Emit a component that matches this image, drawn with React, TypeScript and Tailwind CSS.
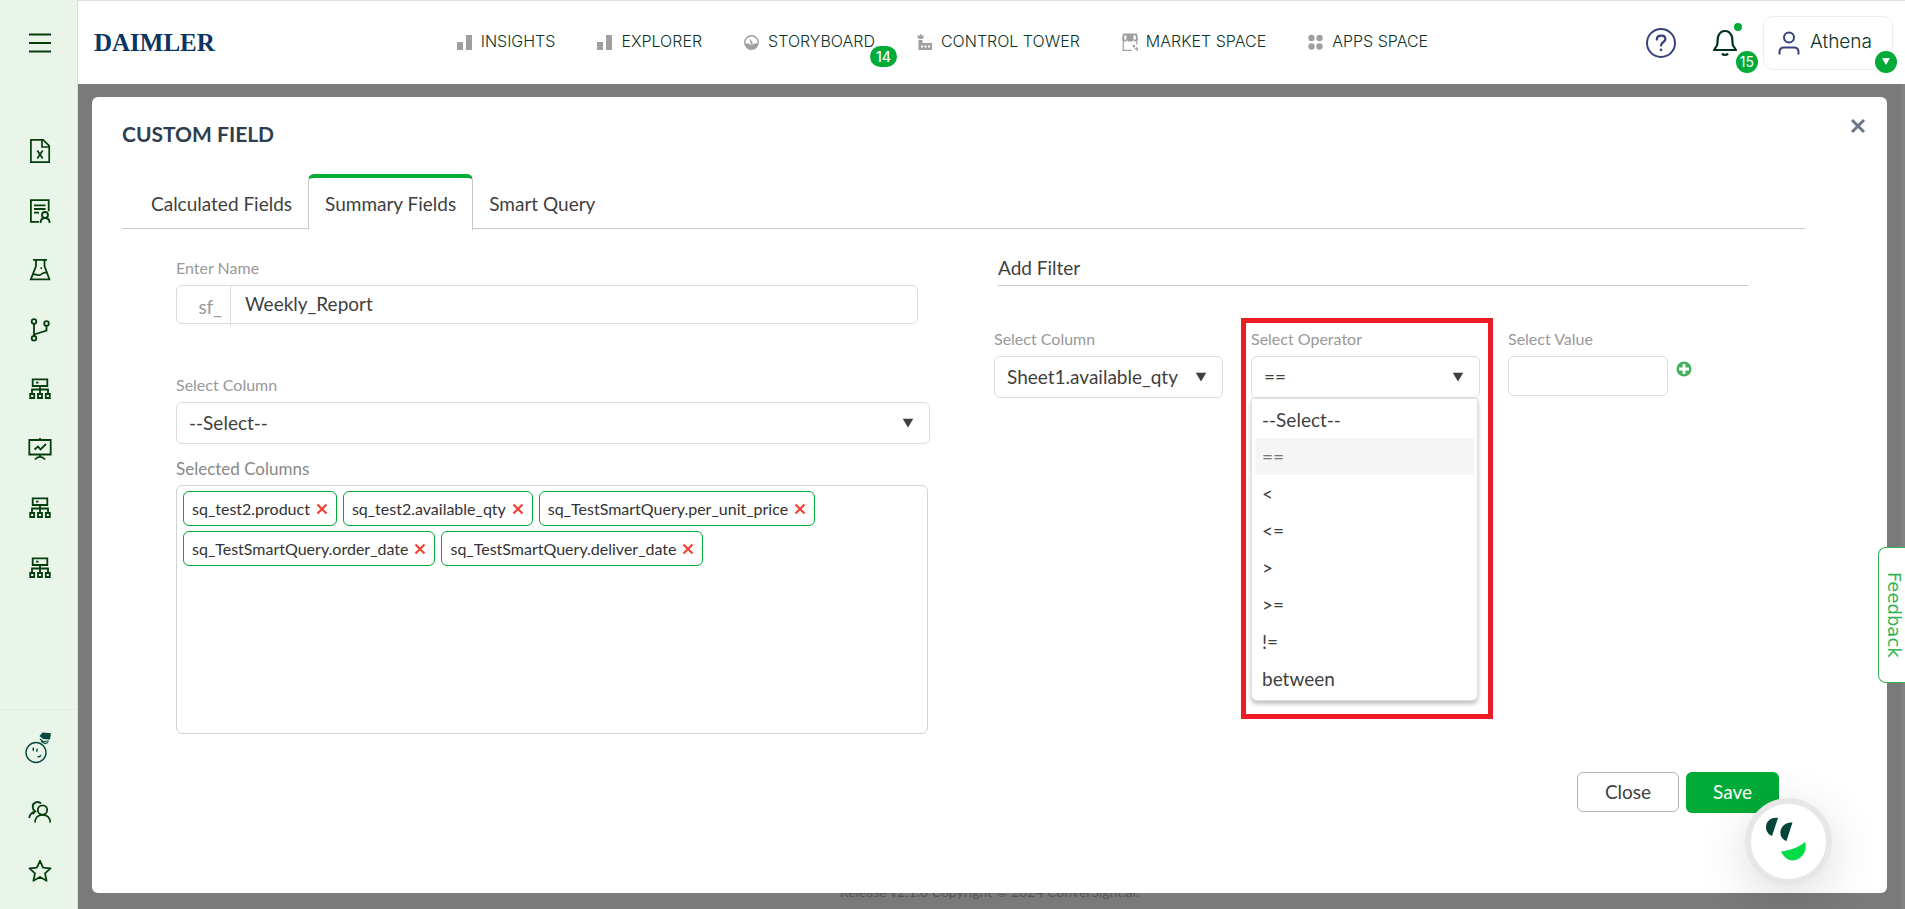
import { useState } from 'react';
import type { ReactNode } from 'react';

const NAV_ITEMS = [
  { label: 'INSIGHTS', icon: 'bars' },
  { label: 'EXPLORER', icon: 'bars' },
  { label: 'STORYBOARD', icon: 'gauge', badge: '14' },
  { label: 'CONTROL TOWER', icon: 'tower' },
  { label: 'MARKET SPACE', icon: 'market' },
  { label: 'APPS SPACE', icon: 'apps' }
];

const TABS = ['Calculated Fields', 'Summary Fields', 'Smart Query'];

const OPERATORS = ['--Select--', '==', '<', '<=', '>', '>=', '!=', 'between'];

const SELECTED_COLUMNS = [
  'sq_test2.product',
  'sq_test2.available_qty',
  'sq_TestSmartQuery.per_unit_price',
  'sq_TestSmartQuery.order_date',
  'sq_TestSmartQuery.deliver_date'
];

const NavIcon = ({ name }: { name: string }) => (
  <svg viewBox="0 0 16 18" className="h-[18px] w-4 shrink-0 fill-[#9f9f9f]">
    {name === 'bars' && (
      <>
        <rect x="0" y="9" width="6" height="8" />
        <rect x="9" y="2" width="6" height="15" />
      </>
    )}
    {name === 'gauge' && (
      <>
        <circle cx="7.5" cy="9.5" r="6.8" fill="none" stroke="#9f9f9f" strokeWidth="1.4" />
        <path d="M1 10.5h3.5c1 0 1.4 1.5 3 1.500s2-1.500 3-1.500H14a6.600 6.600 0 0 1-13 0Z" />
        <path d="M5.300 5.500 8.500 9v2.500H7Z" />
      </>
    )}
    {name === 'tower' && (
      <>
        <path d="M3 1h1.200v1.500H7L5.800 6H1.500L0 2.500h3ZM1.500 7h4v3H15v7H1.500Z" />
        <path d="M4 12.500h2v2H4Zm3.500 0h2v2h-2Zm3.500 0h2v2h-2Z" fill="#fff" />
      </>
    )}
    {name === 'market' && (
      <>
        <path d="M1 .5h14l1 5.500c0 1.500-1 2.500-2.200 2.500-1 0-2-.5-2.300-1.500-.5 1-1.500 1.500-2.300 1.500H7c-1 0-1.500-.5-2-1.500-.3 1-1.200 1.500-2.500 1.500C1 8.500 0 7.500 0 6Z" />
        <path d="M2.500 2.500h2V6.500h-2.500Zm9 0h2l.5 4h-2.500Z" fill="#fff" />
        <path d="M1.200 7.500v9.800h8.500M14.800 8v3.500" fill="none" stroke="#9f9f9f" strokeWidth="1.200" />
        <path d="M11 12.500h2l-1 2ZM12.500 16.500l2.500-2.500M14.500 15.500h1.500l-1 2Z" stroke="#9f9f9f" />
      </>
    )}
    {name === 'apps' && (
      <>
        <circle cx="3.500" cy="5" r="3.200" />
        <circle cx="11.500" cy="5" r="3.200" />
        <circle cx="3.500" cy="13.500" r="3.200" />
        <circle cx="11.500" cy="13.500" r="3.200" />
      </>
    )}
  </svg>
);

const SideIcon = ({ children }: { children: ReactNode }) => (
  <svg viewBox="0 0 24 24" className="size-6" fill="none" stroke="#063d0c" strokeWidth="1.800">
    {children}
  </svg>
);

const FileIcon = () => (
  <SideIcon>
    <path d="M2.900 .9h12.300l6 6v16.200H2.900ZM14 1v7h7M9.300 11.500l5.400 8M14.700 11.500l-5.400 8" strokeWidth="1.700" />
  </SideIcon>
);

const ReportIcon = () => (
  <SideIcon>
    <path d="M11 22.800H2.900V1.200h17.800v11M6 6.300h11.500M6 10h11.500M6 13.700h5" />
    <circle cx="17" cy="16" r="3" />
    <path d="M12.600 24c0-3.500 1.800-5 4.400-5s4.600 1.500 4.600 5" />
  </SideIcon>
);

const FlaskIcon = () => (
  <SideIcon>
    <path d="M5 1.800h14M8 2v6L2.800 21.300h18.600L16.500 8V2M4.500 16.500c3-1.200 5 1.500 7.500.5s2.500-3 7.500-2.500M12.500 10.200h1.500" />
  </SideIcon>
);

const BranchIcon = () => (
  <SideIcon>
    <circle cx="6" cy="3.500" r="2.300" />
    <circle cx="6" cy="20.300" r="2.300" />
    <circle cx="18.500" cy="5.500" r="2.300" />
    <path d="M6 6v12M6 16.500l12.500-4V8" />
  </SideIcon>
);

const NetworkIcon = () => (
  <SideIcon>
    <path d="M4.700 2.300h14.600V9H4.700ZM8 5.700h2.500M12 9v8M4 17v-4.500h16V17M2.200 17h4v4h-4ZM10 17h4v4h-4ZM17.800 17h4v4h-4Z" />
  </SideIcon>
);

const BoardIcon = () => (
  <SideIcon>
    <path d="M1.300 3h21.400v14.500H1.300ZM12 1v2M12 17.500V20M7 22.500c1.500-2 3-2.700 5-2.700s3.500.7 5 2.700M6.500 12.500 10 9.500l2.500 3L18 7" />
  </SideIcon>
);

const MascotIcon = () => (
  <svg viewBox="0 0 28 32" className="mr-1 h-8 w-7" fill="#064a3d">
    <circle cx="12" cy="20.500" r="10" fill="none" stroke="#064a3d" strokeWidth="1.400" />
    <path d="m15.500 4 3-3.500 8.500.7-1 6.300-7-.5Z" />
    <path d="m16 7 3 2.500 6-.5M17 9.200l4 2.300 3-1" fill="none" stroke="#064a3d" strokeWidth="1.200" />
    <path d="M10 15.200v4c-1.700.2-2.500-3.500 0-4ZM13.800 16.200l-.4 4c-1.700 0-1.800-3.700.4-4ZM12.800 24.200c2 0 3.200-.6 4.600-2 .4 3.300-3.400 4.300-4.600 2Z" />
  </svg>
);

const UsersIcon = () => (
  <SideIcon>
    <circle cx="14.500" cy="10" r="4.700" />
    <path d="M7 22.500c0-5 3.200-7.700 7.500-7.700s7.700 2.700 7.700 7.700M13 3.500C10 .5 4.500 2.500 4.700 7c0 2 1 3.300 2.400 4.300C3.500 12.500 1.500 14.500 1.200 18M7.100 11.300l-2.400 3" />
  </SideIcon>
);

const StarIcon = () => (
  <SideIcon>
    <path d="m12 1.800 3.100 6.800 7.400.8-5.500 5 1.600 7.400-6.600-3.800-6.600 3.800L7 14.400l-5.500-5 7.400-.8Z" strokeLinejoin="round" />
  </SideIcon>
);

const MENU = [
  { label: 'Datasets', Icon: FileIcon },
  { label: 'Reports', Icon: ReportIcon },
  { label: 'Experiments', Icon: FlaskIcon },
  { label: 'Relationships', Icon: BranchIcon },
  { label: 'Servers', Icon: NetworkIcon },
  { label: 'Presentations', Icon: BoardIcon },
  { label: 'Clusters', Icon: NetworkIcon },
  { label: 'Pipelines', Icon: NetworkIcon }
];

const SHORTCUTS = [
  { label: 'Assistant', Icon: MascotIcon },
  { label: 'Users', Icon: UsersIcon },
  { label: 'Favourites', Icon: StarIcon }
];

const Caret = () => (
  <svg viewBox="0 0 12 10" className="pointer-events-none absolute top-1/2 right-4 h-[9px] w-3 -translate-y-1/2 fill-[#3f3f3f]">
    <path d="M0 0h12L6 10Z" />
  </svg>
);

interface SelectFieldProps {
  id: string;
  label: string;
  value: string;
  options: string[];
  onChange: (value: string) => void;
}

const SelectField = ({ id, label, value, options, onChange }: SelectFieldProps) => (
  <div className="min-w-0">
    <label htmlFor={id} className="mb-[5px] block text-base leading-6 text-[#999]">{label}</label>
    <div className="relative">
      <select
        id={id}
        value={value}
        onChange={(e) => onChange(e.target.value)}
        className="block h-[42px] w-full appearance-none rounded-md border border-[#dcdcdc] bg-white px-3 text-[19px] text-[#3f3f3f] outline-none"
      >
        {options.map((option) => (
          <option key={option}>{option}</option>
        ))}
      </select>
      <Caret />
    </div>
  </div>
);

const Sidebar = () => (
  <aside className="flex w-[78px] shrink-0 flex-col justify-between border-r border-[#d5e4d6] bg-[#e9f5e9] pl-0.5">
    <div className="flex flex-col items-center pt-[31px]">
      <button aria-label="Toggle menu">
        <SideIcon>
          <path d="M1 3.500h22M1 12h22M1 20.500h22" strokeWidth="2.200" />
        </SideIcon>
      </button>
      <nav className="mt-[84px] flex h-[441px] flex-col items-center justify-between">
        {MENU.map(({ label, Icon }) => (
          <button key={label} aria-label={label}>
            <Icon />
          </button>
        ))}
      </nav>
    </div>
    <div className="-ml-0.5 flex h-[200px] flex-col items-center justify-between border-t border-[#e0eee1] pt-[22px] pb-[26px] pl-0.5">
      {SHORTCUTS.map(({ label, Icon }) => (
        <button key={label} aria-label={label}>
          <Icon />
        </button>
      ))}
    </div>
  </aside>
);

const Header = () => (
  <header className="flex h-[84px] shrink-0 items-center justify-between border-t border-[#e0e0e0] bg-white pr-3 pl-4">
    <a href="#home" className="font-['Liberation_Serif'] text-[25px] leading-8 font-bold text-[#0b3563]">DAIMLER</a>
    <nav className="ml-6 flex items-center gap-[42px] pb-0.5 font-[Inter] text-base font-light text-[#0b3329]">
      {NAV_ITEMS.map((item) => (
        <a key={item.label} href="#nav" className="relative flex items-center gap-2 whitespace-nowrap">
          <NavIcon name={item.icon} />
          <span className="pb-0.5 leading-5">{item.label}</span>
          {item.badge && (
            <span className="absolute -right-[22px] -bottom-3.5 rounded-full bg-[#00ab37] px-1.5 text-sm leading-[21px] font-medium text-white">
              {item.badge}
            </span>
          )}
        </a>
      ))}
    </nav>
    <div className="flex items-center font-[Inter]">
      <button aria-label="Help" className="mr-9">
        <svg viewBox="0 0 30 30" className="size-[30px]" fill="none" stroke="#38427a" strokeWidth="2" strokeLinecap="round">
          <circle cx="15" cy="15" r="14" />
          <path d="M10.800 11.500c.2-5 8.400-5 8.600-.5 0 3.300-4.400 3.200-4.400 6.500" strokeWidth="2.300" />
          <circle cx="15" cy="21.800" r=".6" strokeWidth="1.600" />
        </svg>
      </button>
      <button aria-label="Notifications" className="relative mr-[25px]">
        <svg viewBox="0 0 26 28" className="h-7 w-[26px]" fill="none" stroke="#003024" strokeWidth="2.200">
          <path d="M2 21h22l-3-4.500C20 14 21 10 19.500 6.500 18 3 16 2 13 2S8 3 6.500 6.500C5 10 6 14 5 16.500Z" strokeLinejoin="round" />
          <path d="M10 24.500c1.500 2 4.500 2 6 0" />
        </svg>
        <span className="absolute -top-1.5 -right-1 size-2 rounded-full bg-[#00ab37]" />
        <span className="absolute -right-5 -bottom-4 size-[22px] rounded-full bg-[#00ab37] text-center text-sm leading-[22px] text-white">15</span>
      </button>
      <button className="relative flex h-[54px] items-center gap-2.5 rounded-[10px] border border-[#ededed] pr-5 pl-3.5 text-[19px] font-light text-[#0b3329]">
        <svg viewBox="0 0 22 24" className="h-6 w-[22px]" fill="none" stroke="#38427a" strokeWidth="2">
          <circle cx="11" cy="6.500" r="5" />
          <path d="M1.500 23.500V21c0-3 1.700-4.500 4.500-4.500h10c2.800 0 4.500 1.500 4.500 4.500v2.500" />
        </svg>
        Athena
        <span className="absolute -right-[5px] -bottom-1 flex size-[22px] items-center justify-center rounded-full bg-[#00ab37]">
          <svg viewBox="0 0 8 7" className="h-[7px] w-2 fill-white">
            <path d="M0 0h8L4 7Z" />
          </svg>
        </span>
      </button>
    </div>
  </header>
);

export default function App() {
  const [activeTab, setActiveTab] = useState('Summary Fields');
  const [name, setName] = useState('Weekly_Report');
  const [columns, setColumns] = useState(SELECTED_COLUMNS);
  const [column, setColumn] = useState('--Select--');
  const [filterColumn, setFilterColumn] = useState('Sheet1.available_qty');
  const [operator, setOperator] = useState('==');
  const [filterValue, setFilterValue] = useState('');

  return (
    <div className="flex h-screen overflow-hidden bg-white font-[Lato,sans-serif]">
      <Sidebar />
      <div className="flex min-w-0 flex-1 flex-col">
        <Header />
        <main className="relative flex flex-1 flex-col justify-end border-r-4 border-[#828282] bg-[#7a7a7a]">
          <footer className="pb-[5px] text-center text-sm leading-6 text-[#555]">
            Release v2.1.0 Copyright © 2024 ConverSight.ai.
          </footer>

          {/* Custom field dialog */}
          <section
            role="dialog"
            aria-labelledby="dialog-title"
            className="absolute inset-x-3.5 top-[13px] bottom-4 rounded-md bg-white pr-[82px] pl-[30px] text-[#3f3f3f]"
          >
            <button aria-label="Close dialog" className="absolute top-[21px] right-[21px]">
              <svg viewBox="0 0 16 16" className="size-4" fill="none" stroke="#6b7785" strokeWidth="3">
                <path d="m2 2 12 12M14 2 2 14" />
              </svg>
            </button>
            <h1 id="dialog-title" className="pt-[21px] text-[21px] leading-8 font-bold text-[#2f3e4e]">CUSTOM FIELD</h1>

            <div role="tablist" className="mt-6 flex h-[55px] border-b border-[#c8c8c8] pl-[13px] text-[19px]">
              {TABS.map((tab) => (
                <button
                  key={tab}
                  role="tab"
                  aria-selected={tab === activeTab}
                  onClick={() => setActiveTab(tab)}
                  className={`border-t-4 px-4 ${
                    tab === activeTab
                      ? 'h-14 rounded-t-md border-x border-x-[#c8c8c8] border-t-[#00ab37] bg-white'
                      : 'border-t-transparent pt-0.5'
                  }`}
                >
                  {tab}
                </button>
              ))}
            </div>

            <div className="grid grid-cols-2 gap-16 pt-[27px] pr-[57px] pl-[54px]">
              <div>
                <label htmlFor="field-name" className="mb-[5px] block text-base leading-6 text-[#999]">Enter Name</label>
                <div className="mr-3 flex h-[39px] rounded-md border border-[#dcdcdc]">
                  <span className="h-10 w-[54px] border-r border-[#dcdcdc] pt-[3px] pr-2 text-right text-[19px] leading-9 text-[#999]">sf_</span>
                  <input
                    id="field-name"
                    value={name}
                    onChange={(e) => setName(e.target.value)}
                    className="min-w-0 flex-1 bg-transparent px-3.5 text-[19px] outline-none"
                  />
                </div>

                <div className="mt-[49px]">
                  <SelectField
                    id="summary-column"
                    label="Select Column"
                    value={column}
                    options={['--Select--', ...SELECTED_COLUMNS]}
                    onChange={setColumn}
                  />
                </div>

                <h2 className="mt-[13px] text-[17px] leading-6 text-[#888]">Selected Columns</h2>
                <div className="mt-1 mr-0.5 flex h-[249px] flex-wrap content-start gap-x-1.5 gap-y-[5px] rounded-md border border-[#d3d3d3] px-1.5 py-[5px]">
                  {columns.map((item) => (
                    <span key={item} className="flex h-[35px] items-center gap-1.5 rounded-md border border-[#00ab37] px-2 text-base text-[#333]">
                      {item}
                      <button aria-label={`Remove ${item}`} onClick={() => setColumns(columns.filter((c) => c !== item))}>
                        <svg viewBox="0 0 12 12" className="size-3" fill="none" stroke="#f44336" strokeWidth="2.200">
                          <path d="m1.500 1.500 9 9M10.500 1.500l-9 9" />
                        </svg>
                      </button>
                    </span>
                  ))}
                </div>
              </div>

              <div>
                <h2 className="ml-1 border-b border-[#c8c8c8] pb-[5px] text-[19px] leading-6">Add Filter</h2>
                <div className="mt-[41px] grid grid-cols-[229px_229px_1fr] gap-7">
                  <SelectField
                    id="filter-column"
                    label="Select Column"
                    value={filterColumn}
                    options={['Sheet1.available_qty']}
                    onChange={setFilterColumn}
                  />
                  <div className="relative self-start">
                    <SelectField
                      id="filter-operator"
                      label="Select Operator"
                      value={operator}
                      options={OPERATORS}
                      onChange={setOperator}
                    />
                    <ul
                      role="listbox"
                      aria-label="Operators"
                      className="absolute top-full left-0 z-10 w-[227px] rounded-b-md border border-[#e0e0e0] bg-white px-[3px] pt-0.5 pb-[3px] text-[19px] shadow-[0_3px_4px_rgba(0,0,0,0.25)]"
                    >
                      {OPERATORS.map((option) => (
                        <li
                          key={option}
                          role="option"
                          aria-selected={option === operator}
                          onClick={() => setOperator(option)}
                          className={`px-[7px] leading-[37px] ${option === operator ? 'bg-[#f5f5f5] text-[#777]' : ''}`}
                        >
                          {option}
                        </li>
                      ))}
                    </ul>
                    <div className="pointer-events-none absolute -top-[9px] -left-2.5 z-20 h-[401px] w-[252px] border-5 border-[#ee1c25]" />
                  </div>
                  <div>
                    <label htmlFor="filter-value" className="mb-[5px] block text-base leading-6 text-[#999]">Select Value</label>
                    <div className="flex gap-2">
                      <input
                        id="filter-value"
                        value={filterValue}
                        onChange={(e) => setFilterValue(e.target.value)}
                        className="h-10 w-40 rounded-md border border-[#dcdcdc] px-3 text-[19px] outline-none"
                      />
                      <button aria-label="Add filter" className="self-start pt-[5px]">
                        <svg viewBox="0 0 16 16" className="size-4">
                          <circle cx="8" cy="8" r="7.500" fill="#43b05c" />
                          <path d="M8 3v10M3 8h10" stroke="#fff" strokeWidth="2.800" />
                        </svg>
                      </button>
                    </div>
                  </div>
                </div>
              </div>
            </div>

            <div className="mt-[38px] mr-[26px] flex justify-end gap-[7px] text-[19px]">
              <button className="h-10 w-[102px] rounded-md border border-[#b5b5b5] bg-white">Close</button>
              <button className="h-[41px] w-[93px] rounded-md bg-[#00ab37] text-white">Save</button>
            </div>
          </section>

          <button className="absolute top-[463px] -right-1 h-[136px] w-[27px] rounded-l-lg border border-r-0 border-[#34b455] bg-white pl-1 font-['DejaVu_Sans'] text-lg leading-5 text-[#34b455] [writing-mode:vertical-rl]">
            Feedback
          </button>

          <button
            aria-label="Open assistant"
            className="absolute right-[69px] bottom-6 size-[87px] rounded-full border-6 border-[#e7e7e7] bg-white shadow-[0_12px_50px_rgba(0,0,0,0.14)]"
          >
            <svg viewBox="0 0 75 75" className="size-full">
              <path d="M27 14 21 32C11 28 14 12 27 14ZM41.500 18.500l-6 18.500c-11-4-6-20 6-18.500Z" fill="#04453b" />
              <path d="M30 47.500c9-1 17-4 24-9.500 5 14-15 28-24 9.500Z" fill="#00dc46" />
            </svg>
          </button>
        </main>
      </div>
    </div>
  );
}
